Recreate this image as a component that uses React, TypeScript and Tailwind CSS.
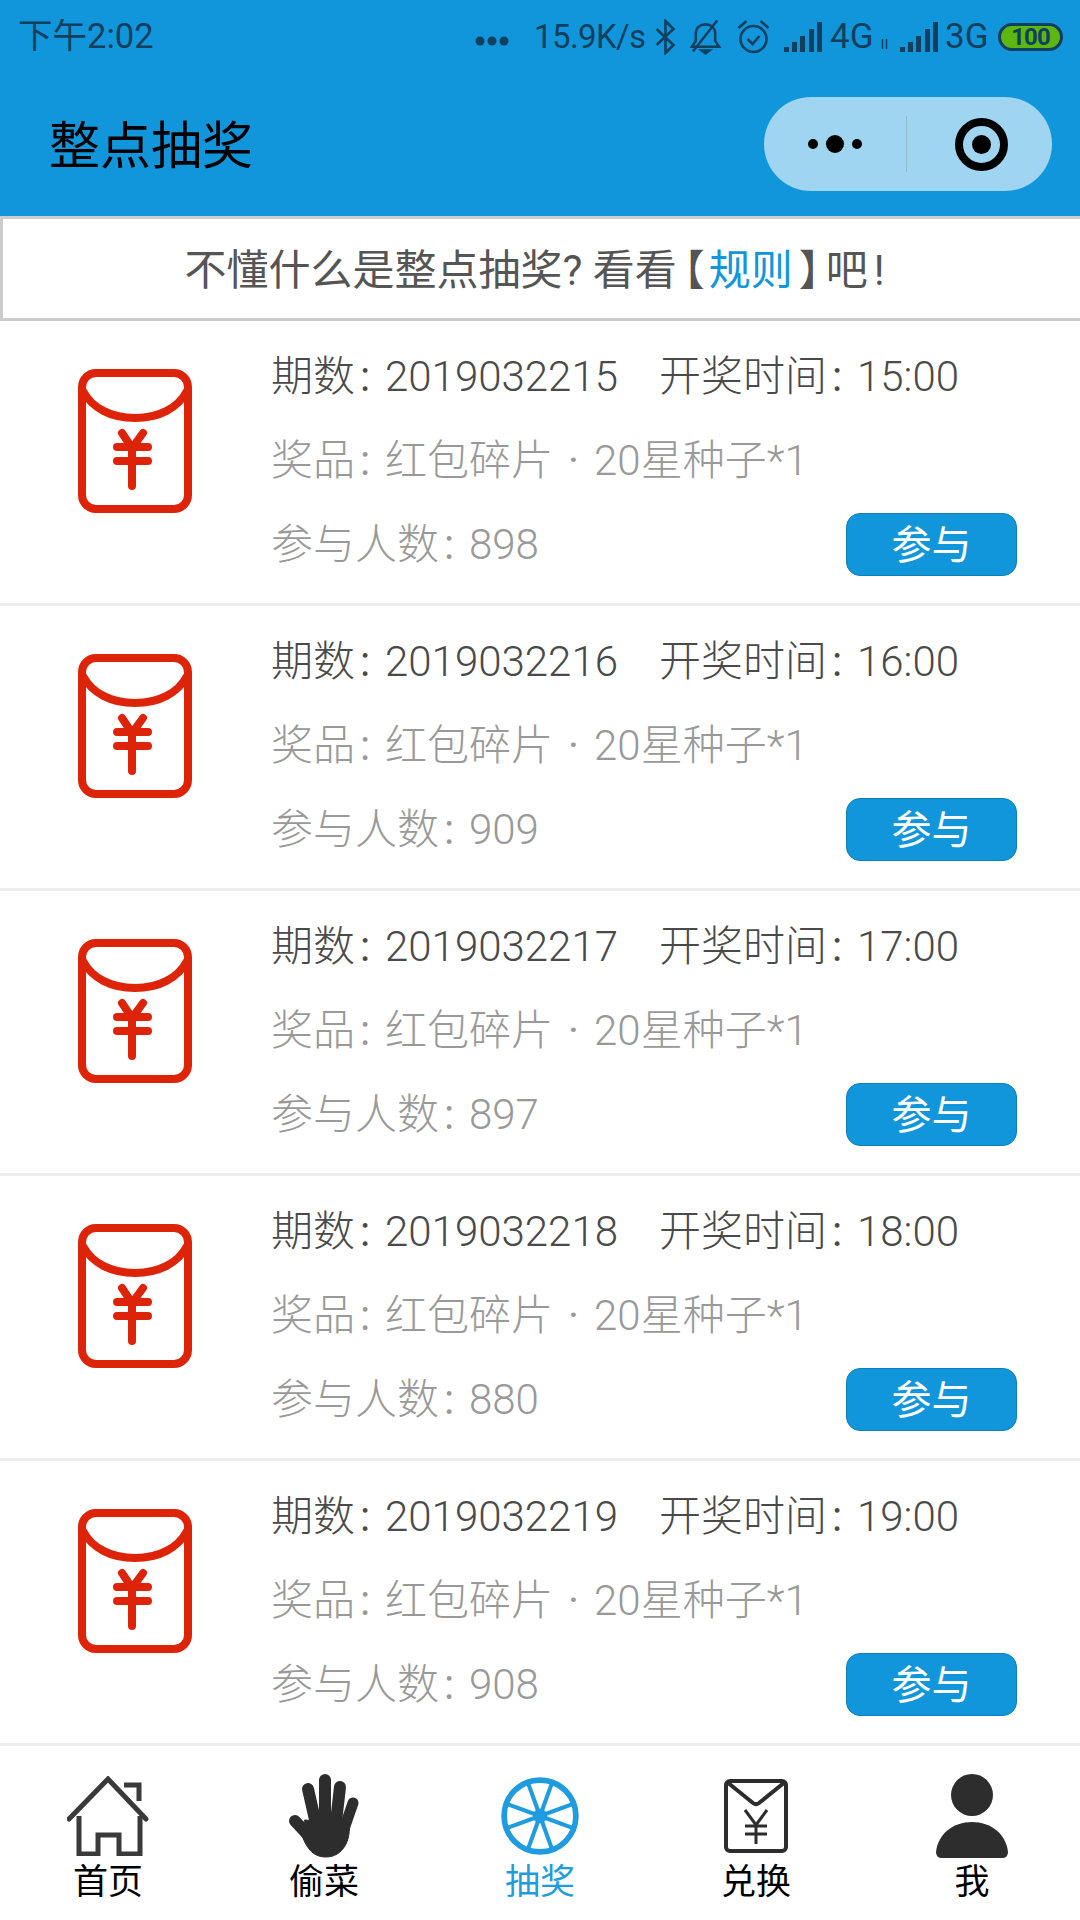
import React from 'react'

const rows = [
  { no: '2019032215', time: '15:00', count: 898 },
  { no: '2019032216', time: '16:00', count: 909 },
  { no: '2019032217', time: '17:00', count: 897 },
  { no: '2019032218', time: '18:00', count: 880 },
  { no: '2019032219', time: '19:00', count: 908 },
]

const Signal = ({ className }: { className?: string }) => (
  <svg width="39" height="30" viewBox="0 0 39 30" fill="#113f5e" className={className}>
    <rect x="0" y="25" width="5" height="5" />
    <rect x="8" y="20" width="5" height="10" />
    <rect x="16" y="14" width="5" height="16" />
    <rect x="25" y="7" width="5" height="23" />
    <rect x="33" y="0" width="5" height="30" />
  </svg>
)

const StatusIcons = () => (
  <div className="flex items-center text-[35px] text-[#113f5e] leading-none">
    <svg width="34" height="12" viewBox="0 0 34 12" className="mr-[25px] mt-[8px]" fill="#113f5e">
      <circle cx="5" cy="6" r="4.500" />
      <circle cx="17" cy="6" r="4.500" />
      <circle cx="29" cy="6" r="4.500" />
    </svg>
    <span className="w-[112px] text-[33px] tracking-[-0.6px]">15.9K/s</span>
    <svg width="23" height="36" viewBox="0 0 22 36" fill="none" stroke="#113f5e" strokeWidth="2.600" className="ml-[8px]">
      <path d="M2 10l17 16-8 8V2l8 8L2 26" />
    </svg>
    <svg width="33" height="38" viewBox="0 0 34 38" fill="none" stroke="#113f5e" strokeWidth="2.600" className="ml-[12px]">
      <path d="M3 29h28l-4-6V15c0-5-4-9-10-9S7 10 7 15v8z" />
      <path d="M13 33h8l-4 3z" fill="#113f5e" />
      <path d="M4 34L29 2" />
    </svg>
    <svg width="35" height="38" viewBox="0 0 34 38" fill="none" stroke="#113f5e" strokeWidth="2.600" className="ml-[14px]">
      <circle cx="17" cy="21" r="13" />
      <path d="M11 21l5 5 7-8" />
      <path d="M2 10l8-7M32 10l-8-7" />
    </svg>
    <Signal className="ml-[13px]" />
    <span className="ml-[7px] w-[47px]">4G</span>
    <svg width="11" height="12" viewBox="0 0 10 12" stroke="#113f5e" strokeWidth="1.500" className="mt-[14px] ml-[2px]">
      <path d="M3 1v10M7 1v10" />
    </svg>
    <Signal className="ml-[10px]" />
    <span className="ml-[6px] w-[44px]">3G</span>
    <div className="ml-[9px] w-[65px] h-[28px] rounded-full border-[3px] border-[#113f5e] bg-[#5cb811] flex items-center justify-center">
      <span className="text-[24px] font-bold tracking-[-1px]">100</span>
    </div>
  </div>
)

const RedPacket = () => (
  <svg width="114" height="144" viewBox="0 0 114 144" fill="none" stroke="#dd2408" strokeWidth="8" strokeLinecap="round">
    <rect x="4" y="4" width="106" height="136" rx="14" />
    <path d="M5 22c9 17 28 27 52 27s43-10 52-27" />
    <path d="M44 64l10 15 11-15M39 78h31M39 92h31M54 79v38" />
  </svg>
)

const HomeIcon = () => (
  <svg width="82" height="80" viewBox="0 0 82 80" fill="none" stroke="#3a3a3a" strokeWidth="5">
    <path d="M2 43L41 3l38 40" strokeLinecap="round" />
    <path d="M57 9h15v16" />
    <path d="M12 40v38h19V59h21v19h21V40" />
  </svg>
)

const HandIcon = () => (
  <svg width="70" height="84" viewBox="0 0 70 84" fill="#2d2d2d" stroke="#2d2d2d" strokeLinecap="round">
    <path d="M19 15l8 35" strokeWidth="12" />
    <path d="M36 6v40" strokeWidth="12" />
    <path d="M51 13l-4 35" strokeWidth="12" />
    <path d="M64 29l-9 26" strokeWidth="11" />
    <path d="M6 47l14 15" strokeWidth="12" />
    <path d="M16 46l44 4c2 16-6 33-23 33-14 0-20-10-25-24z" strokeWidth="1" />
  </svg>
)

const WheelIcon = () => (
  <svg width="80" height="80" viewBox="0 0 78 78" fill="none" stroke="#1f9ce0" strokeWidth="4">
    <circle cx="39" cy="39" r="35" strokeWidth="5.500" />
    <path d="M39 39L51 6M39 39L72 27M39 39L72 51M39 39L51 72M39 39L27 72M39 39L6 51M39 39L6 27M39 39L27 6" />
    <circle cx="39" cy="39" r="7" fill="#1f9ce0" stroke="none" />
  </svg>
)

const EnvelopeIcon = () => (
  <svg width="64" height="74" viewBox="0 0 64 74" fill="none" stroke="#2d2d2d" strokeWidth="4">
    <rect x="2" y="2" width="60" height="70" rx="4" />
    <path d="M3 3l26 21c2 1.500 4 1.500 6 0L61 3" />
    <path d="M21 31l11 15 11-15M21 47h22M21 55h22M32 46v19" strokeWidth="3" />
  </svg>
)

const PersonIcon = () => (
  <svg width="72" height="84" viewBox="0 0 72 84" fill="#2d2d2d">
    <circle cx="36" cy="21" r="21" />
    <path d="M0 78C2 60 17 48 36 48s34 12 36 30c0 3-2 6-5 6H5c-3 0-5-3-5-6z" />
  </svg>
)

const tabs = [
  { label: '首页', icon: <HomeIcon />, active: false },
  { label: '偷菜', icon: <HandIcon />, active: false },
  { label: '抽奖', icon: <WheelIcon />, active: true },
  { label: '兑换', icon: <EnvelopeIcon />, active: false },
  { label: '我', icon: <PersonIcon />, active: false },
]

const Colon = () => <span className="inline-block w-[30px] pl-[5px] font-normal">:</span>

export default function App() {
  return (
    <div className="w-[1080px] h-[1920px] bg-white flex flex-col overflow-hidden font-[Roboto,'Noto_Sans_CJK_SC',sans-serif]">
      <header className="h-[216px] shrink-0 bg-[#1296db] flex flex-col">
        <div className="h-[72px] pt-[1px] flex items-center justify-between pl-[18px] pr-[17px]">
          <span className="text-[34.500px] leading-none text-[#113f5e]">下午2:02</span>
          <StatusIcons />
        </div>
        <div className="flex items-center justify-between pl-[49px] pr-[28px] mt-[25px]">
          <h1 className="text-[51px] leading-[89px] pt-[5px] font-normal text-black">整点抽奖</h1>
          <div className="w-[288px] h-[94px] rounded-full bg-[#a0d5f1] flex items-center">
            <div className="flex-1 flex items-center justify-center gap-[8px]">
              <span className="w-[10px] h-[10px] rounded-full bg-black" />
              <span className="w-[18px] h-[18px] rounded-full bg-black" />
              <span className="w-[10px] h-[10px] rounded-full bg-black" />
            </div>
            <div className="w-[1px] h-[56px] bg-[#8db8cf]" />
            <div className="flex-1 flex items-center justify-center pl-[4px]">
              <div className="w-[53px] h-[53px] rounded-full border-[8px] border-black flex items-center justify-center">
                <span className="w-[19px] h-[19px] rounded-full bg-black" />
              </div>
            </div>
          </div>
        </div>
      </header>

      <div className="h-[105px] shrink-0 border-y-[3px] border-l-[3px] border-[#cccccc] pt-[3px] pr-[14px] flex items-center justify-center text-[42px] text-[#555555] whitespace-pre">
        不懂什么是整点抽奖? 看看
        <span className="ml-[7px] mr-[4px] [font-feature-settings:'halt']">【</span>
        <span className="text-[#1296db]">规则</span>
        <span className="ml-[6px] mr-[6px] [font-feature-settings:'halt']">】</span>
        吧<span className="ml-[6px]">!</span>
      </div>

      <div className="flex-1">
        {rows.map((r) => (
          <div key={r.no} className="h-[285px] border-b-[3px] border-[#eeeeee] flex">
            <div className="w-[271px] shrink-0 pl-[78px] pt-[48px]">
              <RedPacket />
            </div>
            <div className="flex-1 pt-[14px] pr-[63px] text-[42px] leading-[84px] font-light">
              <div className="text-[#4a4a4a] flex">
                <span className="w-[388px]">期数<Colon />{r.no}</span>
                <span>开奖时间<Colon />{r.time}</span>
              </div>
              <div className="text-[#999999]">
                奖品<Colon />红包碎片
                <span className="inline-block w-[41px] text-center font-normal">·</span>
                20星种子*1
              </div>
              <div className="text-[#999999] flex items-center justify-between">
                <span>参与人数<Colon />{r.count}</span>
                <button className="w-[171px] h-[63px] mb-[2px] pt-[3px] rounded-[14px] bg-[#1296db] border border-[#0f7fb8] text-white text-[40px] font-normal leading-none flex items-center justify-center">
                  参与
                </button>
              </div>
            </div>
          </div>
        ))}
      </div>

      <nav className="h-[174px] shrink-0 grid grid-cols-5">
        {tabs.map((t) => (
          <div key={t.label} className="flex flex-col items-center pt-[28px]">
            <div className="h-[84px] flex items-center justify-center">{t.icon}</div>
            <span className={`mt-[5px] text-[35px] leading-[40px] ${t.active ? 'text-[#1f9ce0]' : 'text-black'}`}>{t.label}</span>
          </div>
        ))}
      </nav>
    </div>
  )
}
